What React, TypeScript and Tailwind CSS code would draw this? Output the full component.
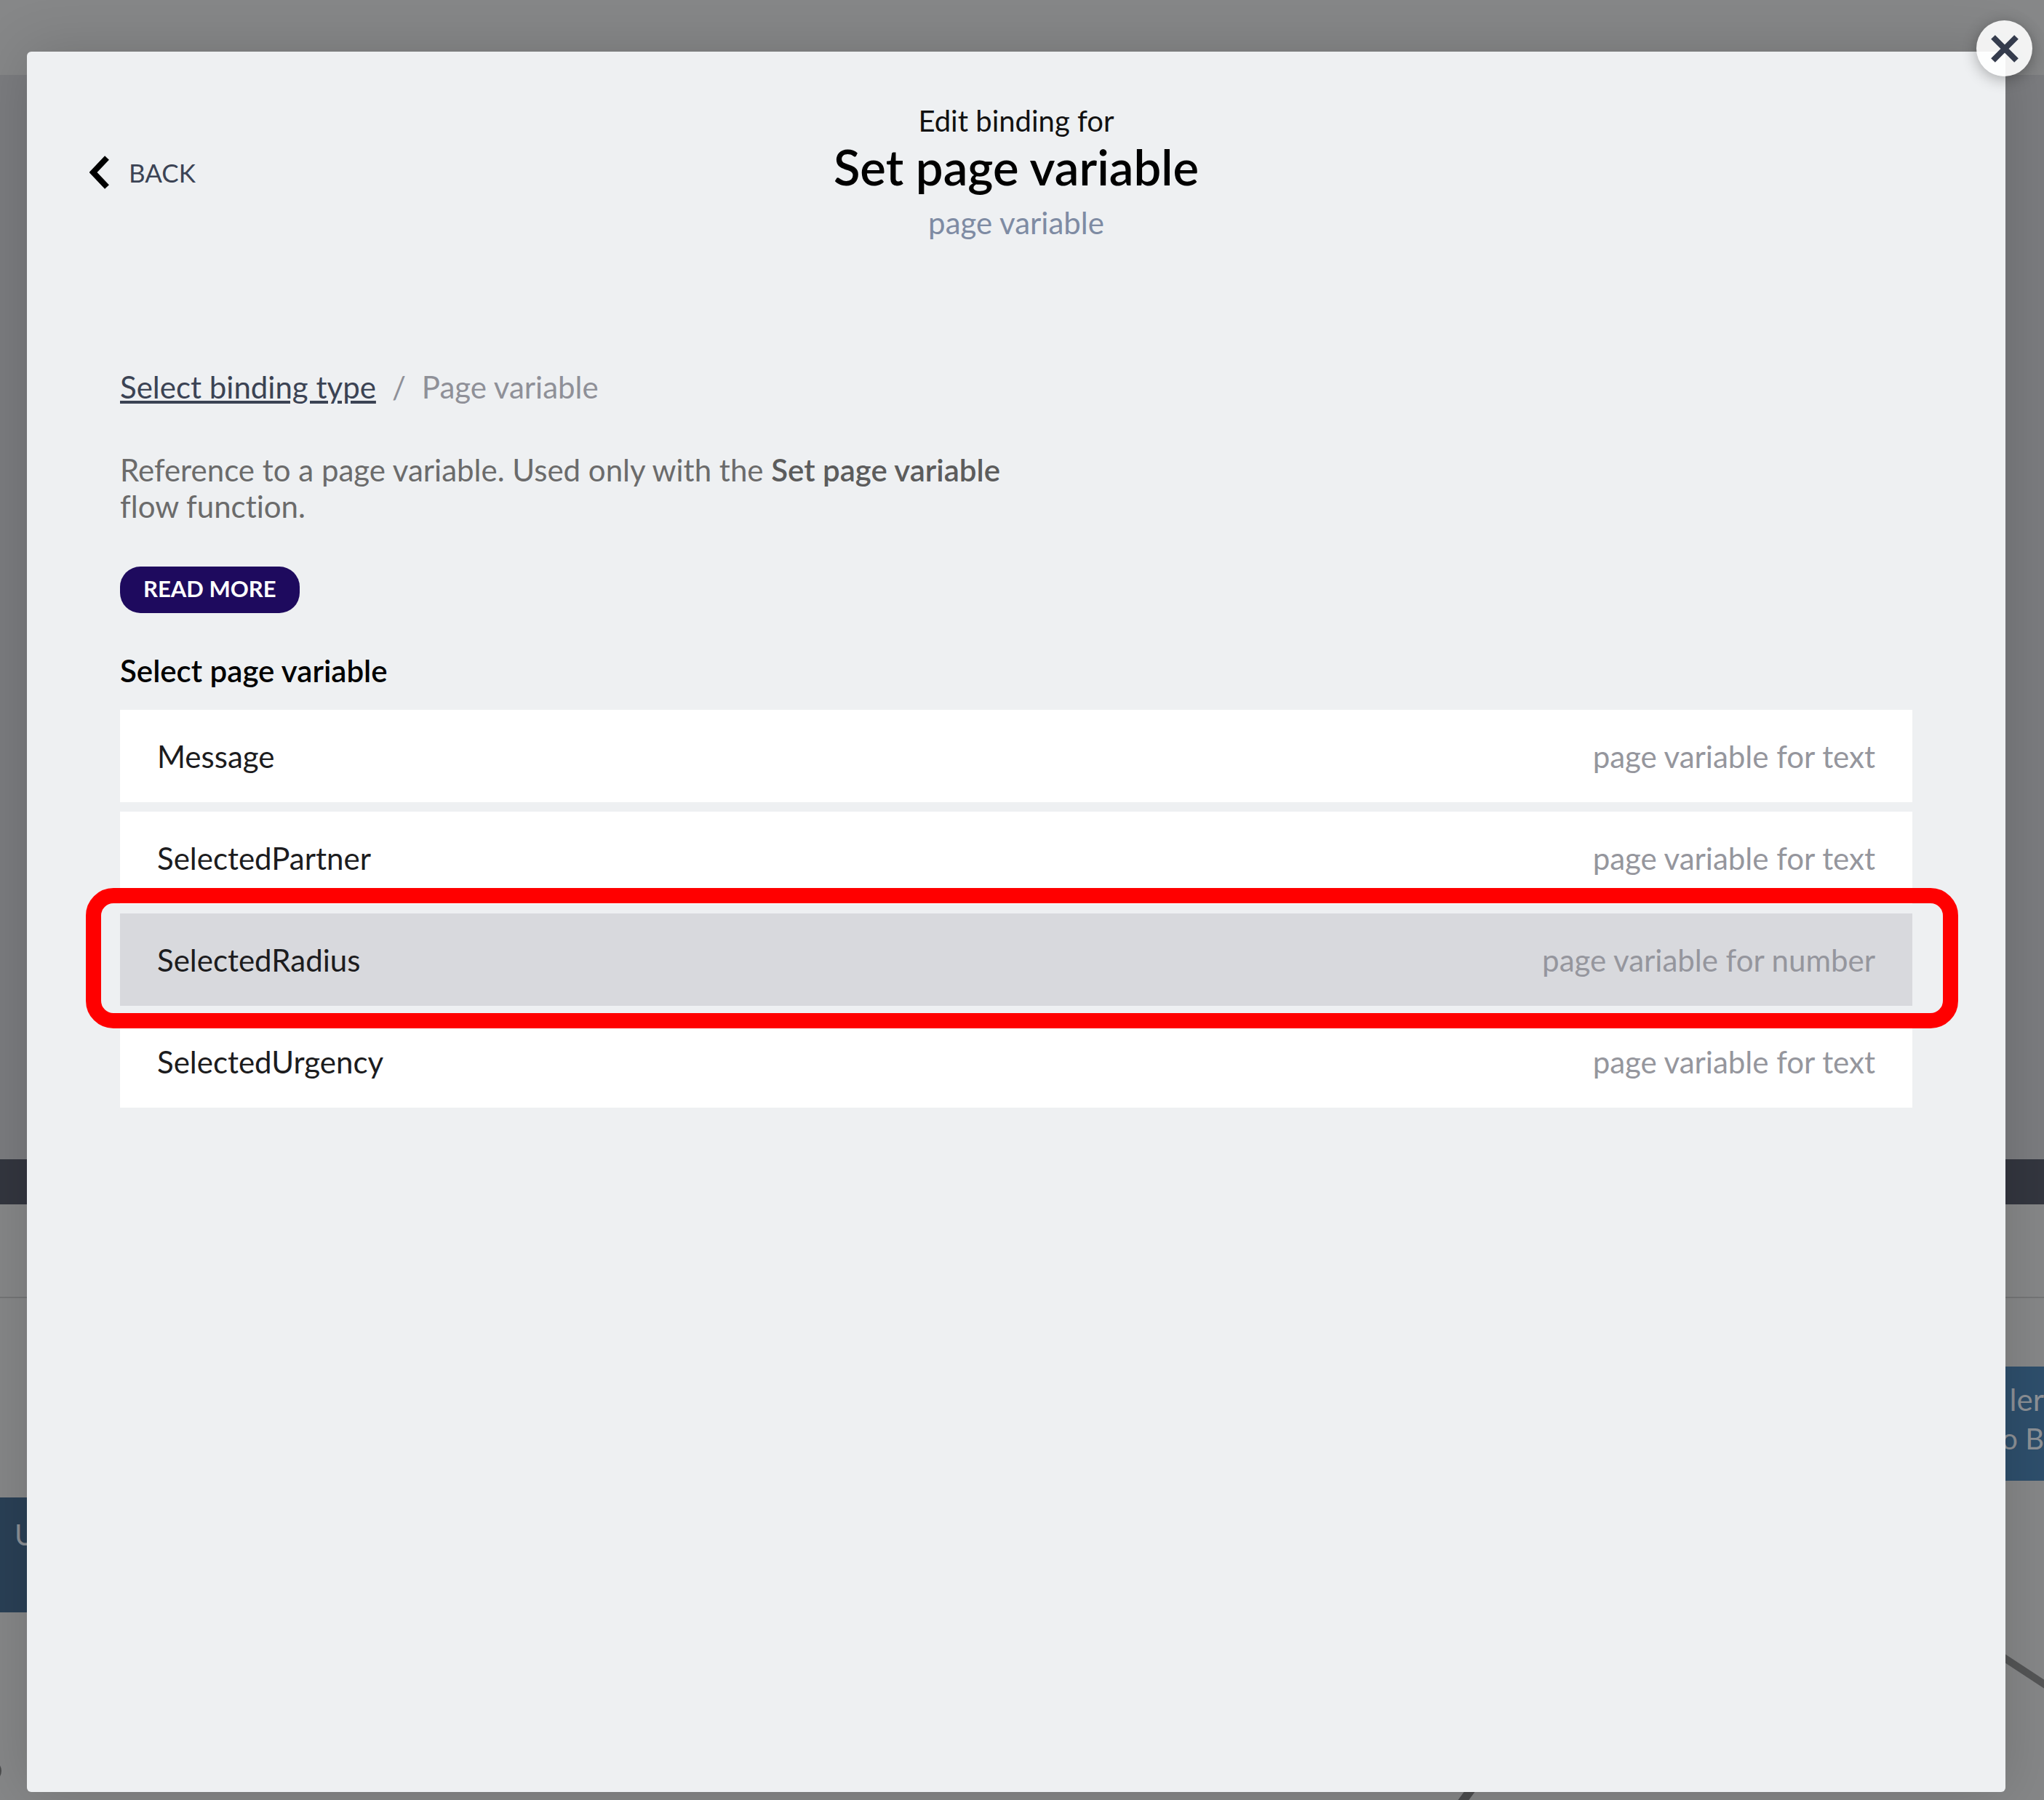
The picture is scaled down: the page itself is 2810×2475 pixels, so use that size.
type Variable = { name: string; kind: string; selected?: boolean };

const variables: Variable[] = [
  { name: "Message", kind: "page variable for text" },
  { name: "SelectedPartner", kind: "page variable for text" },
  { name: "SelectedRadius", kind: "page variable for number", selected: true },
  { name: "SelectedUrgency", kind: "page variable for text" },
];

/* The dimmed flow editor behind the dialog */
function Backdrop() {
  return (
    <div aria-hidden="true" className="absolute inset-0 flex flex-col overflow-hidden bg-[#868788]">
      <div className="h-[103px] shrink-0" />
      <div className="h-[1491px] shrink-0 bg-[#7b7c7f]" />
      <div className="h-[62px] shrink-0 bg-[#33363f]" />
      <div className="h-[129px] shrink-0 border-b-2 border-[#747576]" />
      <div className="relative flex-1">
        <div className="absolute top-[274px] left-0 h-[158px] w-[200px] bg-[#2a4056] pt-[26px] pl-[20px] text-[40px] leading-[50px] text-[#8d9196]">
          U
        </div>
        <div className="absolute top-[94px] right-0 h-[157px] w-[200px] bg-[#2e4f6c] pt-[18px] text-right text-[42px] leading-[54px] whitespace-nowrap text-[#8d9196]">
          <div>ler</div>
          <div className="text-[40px]">o B</div>
        </div>
        <svg className="absolute top-[469px] right-0 h-[80px] w-[100px]" viewBox="0 0 100 80">
          <path d="M20 9 L110 68" stroke="#545556" strokeWidth="10" />
        </svg>
        <svg className="absolute bottom-0 left-[1990px] h-[30px] w-[60px]" viewBox="0 0 60 30">
          <path d="M44 0 L16 38" stroke="#4c4d4e" strokeWidth="12" />
        </svg>
        <div className="absolute bottom-[25px] -left-[28px] size-[30px] rounded-full bg-[#4c4d4e]" />
      </div>
    </div>
  );
}

function VariableRow({ name, kind, selected }: Variable) {
  return (
    <li className="relative">
      <button
        type="button"
        className={`flex h-[127px] w-full items-center justify-between px-[51px] text-left ${selected ? "bg-[#d8d9dd]" : "bg-white"}`}
      >
        <span className="text-[#1c1c1e]">{name}</span>
        <span className="text-[#95969d]">{kind}</span>
      </button>
      {selected && (
        <span className="pointer-events-none absolute -top-[35px] -right-[63px] -bottom-[31px] -left-[47px] z-10 rounded-[38px] border-[21px] border-[#ff0000]" />
      )}
    </li>
  );
}

export default function App() {
  return (
    <div className="relative flex min-h-screen flex-col font-['Lato',sans-serif] text-[42px] leading-[50px] [font-variant-ligatures:none]">
      <Backdrop />
      <main
        role="dialog"
        aria-labelledby="dialog-title"
        className="relative mt-[71px] mr-[53px] mb-[11px] ml-[37px] flex-1 rounded-[6px] bg-[#eef0f2] shadow-[0_0_80px_rgba(0,0,0,0.16)]"
      >
        <button
          type="button"
          aria-label="Close"
          className="absolute -top-[43px] -right-[37px] flex size-[77px] items-center justify-center rounded-full bg-white/90 shadow-[0_4px_20px_rgba(0,0,0,0.3)]"
        >
          <svg className="size-[40px]" viewBox="0 0 40 40" fill="none" stroke="#353c4d" strokeWidth="8">
            <path d="M4 4 L36 36 M36 4 L4 36" />
          </svg>
        </button>

        <header className="grid grid-cols-[1fr_auto_1fr] items-start px-[86px] pt-[70px]">
          <button type="button" className="mt-[71px] flex items-center gap-[27px] justify-self-start text-[35px] text-[#3b4354]">
            <svg className="h-[46px] w-[27px]" viewBox="0 0 27 46" fill="none" stroke="#000" strokeWidth="8">
              <path d="M24 3 L5 23 L24 43" />
            </svg>
            BACK
          </button>
          <div className="text-center">
            <p className="text-[40px] text-[#111]">Edit binding for</p>
            <h1 id="dialog-title" className="text-[67px] leading-[76px] font-semibold text-black">
              Set page variable
            </h1>
            <p className="mt-[14px] text-[#7e8ba3]">page variable</p>
          </div>
        </header>

        <section className="px-[128px] pt-[176px]">
          <nav aria-label="Breadcrumb" className="flex gap-[22px] text-[#8f9098]">
            <a href="#types" className="text-[#3b4354] underline">
              Select binding type
            </a>
            <span>/</span>
            <span>Page variable</span>
          </nav>
          <p className="mt-[64px] max-w-[1280px] text-[#6b6b6b]">
            Reference to a page variable. Used only with the <strong className="font-semibold text-[#5c5c5c]">Set page variable</strong>
            <br />
            flow function.
          </p>
          <a
            href="#more"
            className="mt-[58px] flex h-[64px] w-fit items-center rounded-[28px] bg-[#1e0a5e] px-[32px] pb-[4px] text-[31px] font-bold text-white"
          >
            READ MORE
          </a>
          <h2 className="mt-[54px] font-semibold text-black">Select page variable</h2>
          <ul className="mt-[29px] flex flex-col gap-[13px]">
            {variables.map((v) => (
              <VariableRow key={v.name} {...v} />
            ))}
          </ul>
        </section>
      </main>
    </div>
  );
}
